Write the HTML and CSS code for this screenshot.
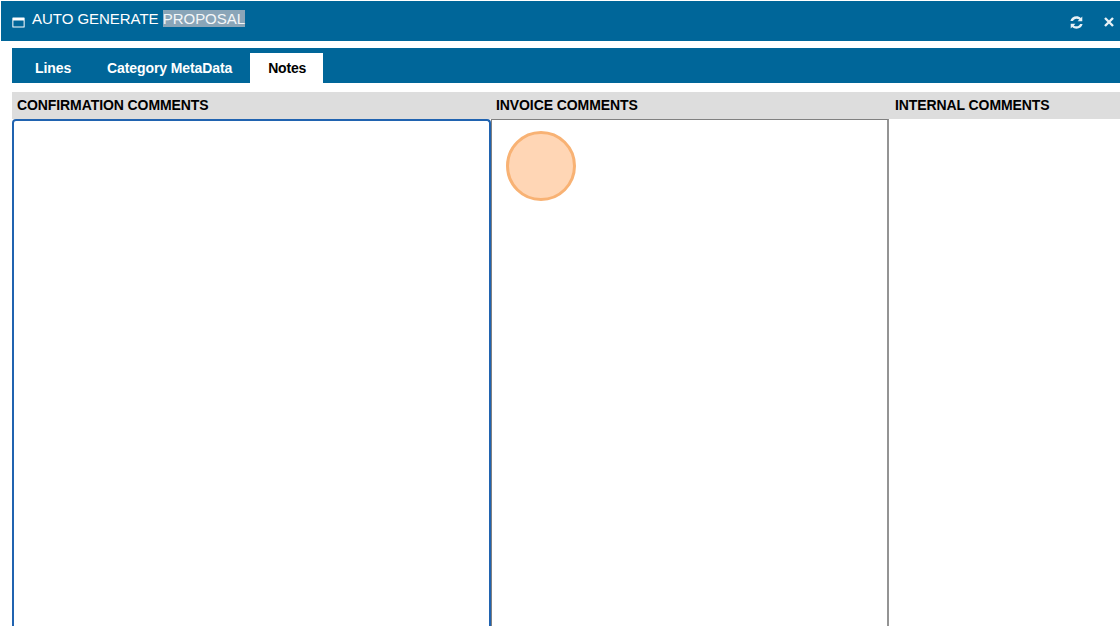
FILE: index.html
```html
<!DOCTYPE html>
<html lang="en">
<head>
<meta charset="utf-8">
<title>Auto Generate Proposal</title>
<link rel="stylesheet" href="styles.css">
</head>
<body>
<div class="window">
  <header class="titlebar">
    <svg class="win-icon" viewBox="0 0 14 12" width="13" height="11" aria-hidden="true">
      <path fill="#fff" fill-rule="evenodd" d="M1 0.5h12a.7.7 0 0 1 .7.7v9.6a.7.7 0 0 1-.7.7H1a.7.7 0 0 1-.7-.7V1.200a.7.7 0 0 1 .7-.7zM1.400 3.800v6.600h11.200V3.800z"/>
    </svg>
    <h1 class="title">AUTO GENERATE <span class="selected">PROPOSAL</span></h1>
    <div class="actions">
      <svg class="refresh" viewBox="0 0 14 14" width="15" height="15" aria-hidden="true">
        <path fill="#e8f1f6" d="M1.300 5.600C1.900 3 4.200 1.200 7 1.200c1.600 0 3 .6 4 1.600L12.400 1.500v4.400H8l1.600-1.600C8.900 3.700 8 3.400 7 3.400c-1.500 0-2.800.9-3.300 2.200zM12.700 8.400C12.100 11 9.800 12.800 7 12.800c-1.600 0-3-.6-4-1.600L1.600 12.500V8.100H6L4.400 9.700c.7.600 1.600.9 2.600.9 1.500 0 2.800-.9 3.300-2.200z"/>
      </svg>
      <svg class="close" viewBox="0 0 10 10" width="10" height="10" aria-hidden="true">
        <path stroke="#e8f1f6" stroke-width="2.400" d="M1 1l8 8M9 1l-8 8"/>
      </svg>
    </div>
  </header>
  <nav class="tabs">
    <span class="tab">Lines</span>
    <span class="tab">Category MetaData</span>
    <span class="tab active">Notes</span>
  </nav>
  <section class="columns">
    <div class="column col-confirm">
      <div class="col-head">CONFIRMATION COMMENTS</div>
      <div class="box focused"></div>
    </div>
    <div class="column col-invoice">
      <div class="col-head">INVOICE COMMENTS</div>
      <div class="box plain"></div>
    </div>
    <div class="column col-internal">
      <div class="col-head">INTERNAL COMMENTS</div>
      <div class="box"></div>
    </div>
  </section>
</div>
<div class="click-marker"></div>
</body>
</html>
```

FILE: styles.css
```css
* { box-sizing: border-box; }
html, body { margin: 0; height: 100%; overflow: hidden; background: #fff; }
body { font-family: "Liberation Sans", Arial, sans-serif; color: #000; position: relative; }
.window { height: 626px; display: flex; flex-direction: column; padding-top: 1px; }
.titlebar {
  height: 40px; background: #006699; color: #fff; margin-left: 1px;
  display: flex; align-items: flex-start; flex: none;
}
.win-icon { margin: 16px 0 0 11px; flex: none; }
.title { margin: 9px 0 0 7px; font-size: 15px; font-weight: 400; line-height: 18px; white-space: nowrap; letter-spacing: -0.03px; }
.selected { background: #8aa5b8; color: #f4f7f9; }
.actions { margin-left: auto; display: flex; align-items: center; gap: 20px; margin-top: 14px; margin-right: 6px; }
.refresh { display: block; }
.close { display: block; margin-top: -1px; }
.tabs {
  margin: 7px 0 0 12px; height: 35px; background: #006699; flex: none;
  display: flex; align-items: flex-end; padding-left: 5px;
}
.tab {
  height: 30px; padding: 0 18px; line-height: 31px;
  font-size: 14px; font-weight: 700; color: #fff; white-space: nowrap; letter-spacing: -0.1px;
}
.tab.active { background: #fff; color: #000; padding-right: 17px; letter-spacing: -0.2px; }
.columns {
  margin: 9px 0 0 12px; flex: 1; min-height: 0;
  display: grid; grid-template-columns: 479px 398px 1fr;
}
.column { display: flex; flex-direction: column; min-width: 0; }
.col-head {
  height: 27px; background: #dddddd; flex: none;
  font-size: 14px; font-weight: 700; line-height: 27px; padding-left: 5px; white-space: nowrap; letter-spacing: -0.09px;
}
.col-internal .col-head { padding-left: 6px; }
.box { flex: 1; background: #fff; }
.box.focused { border: 2px solid #2063b0; border-bottom: 0; border-radius: 4px 4px 0 0; }
.box.plain { border: 1px solid #808080; border-right: 2px solid #949494; border-bottom: 0; }
.click-marker {
  position: absolute; left: 505.500px; top: 130.500px; width: 70.500px; height: 70.500px;
  border-radius: 50%; background: #ffd6b5; border: 3px solid #f8b274;
}
```
